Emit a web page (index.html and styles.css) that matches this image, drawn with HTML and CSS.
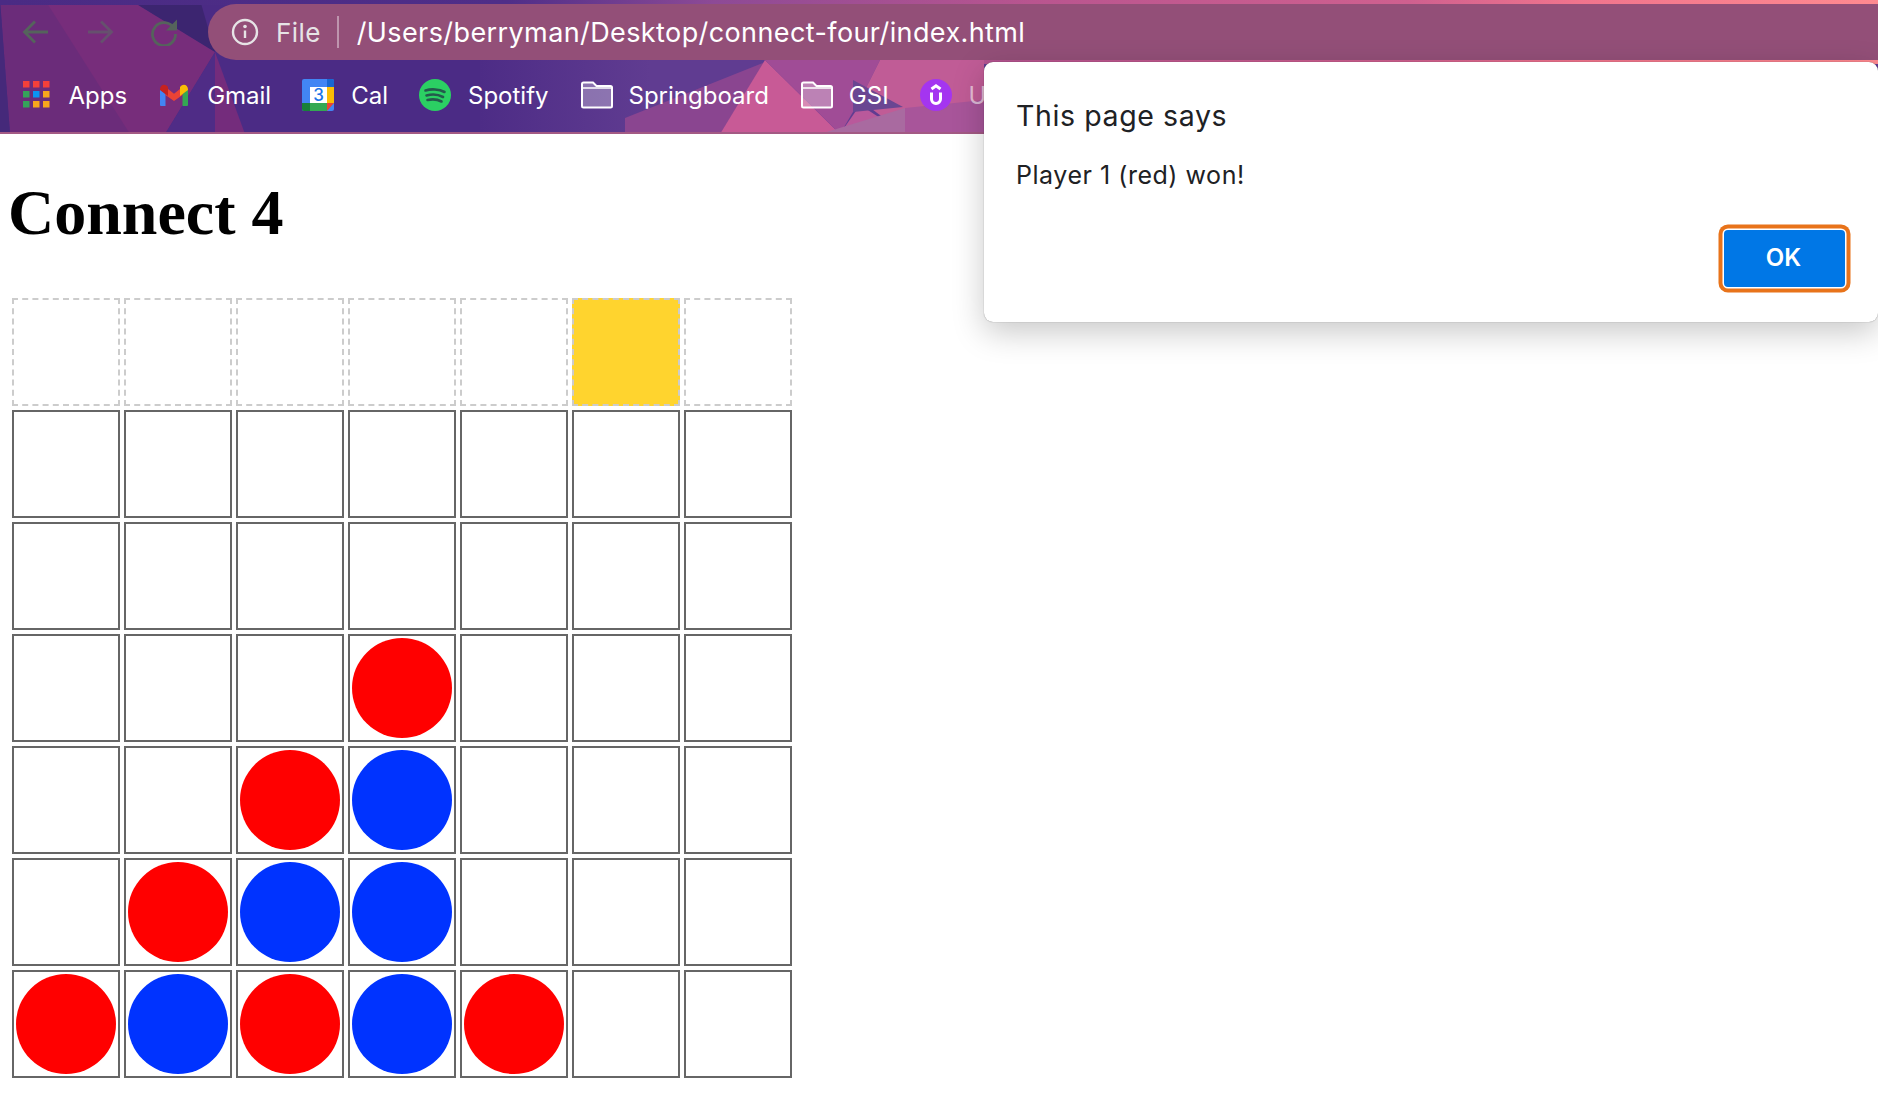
FILE: index.html
```html
<!DOCTYPE html>
<html lang="en">
<head>
<meta charset="utf-8">
<title>Connect 4</title>
<link rel="stylesheet" href="styles.css">
</head>
<body>
<header class="chrome">
  <svg class="wallpaper" viewBox="0 0 1878 134" preserveAspectRatio="none" aria-hidden="true">
    <defs>
      <linearGradient id="strip" x1="0" x2="1878" y1="0" y2="0" gradientUnits="userSpaceOnUse">
        <stop offset="0" stop-color="#4a2b84"/>
        <stop offset=".27" stop-color="#4f2e88"/>
        <stop offset=".38" stop-color="#8d4a96"/>
        <stop offset=".55" stop-color="#b9558f"/>
        <stop offset=".75" stop-color="#cf608f"/>
        <stop offset=".84" stop-color="#f0748d"/>
        <stop offset="1" stop-color="#ff8a90"/>
      </linearGradient>
      <linearGradient id="mid" x1="480" x2="650" y1="0" y2="0" gradientUnits="userSpaceOnUse">
        <stop offset="0" stop-color="#4d2c86"/>
        <stop offset="1" stop-color="#603c91"/>
      </linearGradient>
    </defs>
    <rect width="1878" height="134" fill="#4b2b85"/>
    <polygon points="0,0 130,0 215,52 165,134 10,134" fill="#6b2c7a"/>
    <polygon points="0,0 10,134 0,134" fill="#45297a"/>
    <polygon points="45,0 130,0 215,52 165,134 130,134" fill="#772d7b"/>
    <polygon points="130,0 215,52 200,0" fill="#3c2570"/>
    <polygon points="215,52 215,134 245,134" fill="#742c7c"/>
    <polygon points="215,52 165,134 215,134" fill="#4f2c86"/>
    <rect x="480" width="1398" height="134" fill="url(#mid)"/>
    <polygon points="625,118 765,62 720,134 625,134" fill="#8a4590"/>
    <polygon points="765,60 720,134 840,134" fill="#c85a96"/>
    <polygon points="765,60 880,60 860,100 840,134" fill="#a04c96"/>
    <polygon points="840,134 860,105 905,134" fill="#b9599b"/>
    <polygon points="860,100 880,60 984,60 984,134 905,134" fill="#c05c96"/>
    <polygon points="853,80 903,107 853,112" fill="#6a4692"/>
    <polygon points="820,134 905,108 905,134" fill="#a96aa0"/>
    <polygon points="905,108 984,100 984,134 905,134" fill="#a8559a"/>
    <rect width="1878" height="5" fill="url(#strip)"/>
    <rect x="984" y="58" width="894" height="6" fill="url(#strip)"/>
    <rect y="132" width="1878" height="2" fill="#a35a84"/>
  </svg>
  <div class="toolbar">
    <div class="nav-buttons">
      <svg class="nav-icon" viewBox="0 0 28 28"><path d="M26 14H3M13 3.500 2.500 14 13 24.500"/></svg>
      <svg class="nav-icon nav-icon-off" viewBox="0 0 28 28"><path d="M2 14h23M15 3.500 25.500 14 15 24.500"/></svg>
      <svg class="nav-icon" viewBox="0 0 28 28"><path d="M24 10.500A11.500 11.500 0 1 0 25.500 16"/><path class="solid" d="M27 1.500V12.500H16Z"/></svg>
    </div>
    <div class="omnibox">
      <svg class="info-icon" viewBox="0 0 28 28"><circle cx="14" cy="14" r="12"/><path d="M14 12.500v7.500"/><circle class="dot" cx="14" cy="8.500" r="1.800"/></svg>
      <span class="scheme">File</span>
      <span class="divider"></span>
      <span class="url">/Users/berryman/Desktop/connect-four/index.html</span>
    </div>
  </div>
  <nav class="bookmarks">
    <a class="bookmark">
      <svg class="bm-icon" viewBox="0 0 32 32">
        <rect x="3" y="2" width="6.500" height="6.500" fill="#f4403a"/><rect x="13" y="2" width="6.500" height="6.500" fill="#f4403a"/><rect x="23" y="2" width="6.500" height="6.500" fill="#f4403a"/>
        <rect x="3" y="12" width="6.500" height="6.500" fill="#35a45a"/><rect x="13" y="12" width="6.500" height="6.500" fill="#0a94f2"/><rect x="23" y="12" width="6.500" height="6.500" fill="#f8a61c"/>
        <rect x="3" y="22" width="6.500" height="6.500" fill="#35a45a"/><rect x="13" y="22" width="6.500" height="6.500" fill="#f8a61c"/><rect x="23" y="22" width="6.500" height="6.500" fill="#f8a61c"/>
      </svg>
      <span>Apps</span>
    </a>
    <a class="bookmark">
      <svg class="bm-icon" viewBox="0 0 32 32">
        <path d="M2 10.500V26a1 1 0 0 0 1 1h4.500V15Z" fill="#4285f4"/>
        <path d="M30 10.500V26a1 1 0 0 1-1 1h-4.500V15Z" fill="#34a853"/>
        <path d="M7.500 8 16 14.800 24.500 8V16L16 22 7.500 16Z" fill="#ea4335"/>
        <path d="M2 10.500C2 6 6 4.500 8.500 6.500L10 8V17L2 11Z" fill="#c5221f"/>
        <path d="M30 10.500C30 6 26 4.500 23.500 6.500L22 8V17L30 11Z" fill="#fbbc04"/>
      </svg>
      <span>Gmail</span>
    </a>
    <a class="bookmark">
      <svg class="bm-icon" viewBox="0 0 32 32">
        <rect width="32" height="32" rx="2" fill="#4285f4"/>
        <rect x="8" y="8" width="17" height="16" fill="#fff"/>
        <rect x="25" y="8" width="7" height="16" fill="#fbbc04"/>
        <rect x="8" y="24" width="17" height="8" fill="#34a853"/>
        <path d="M0 24h8v8H2a2 2 0 0 1-2-2Z" fill="#188038"/>
        <path d="M25 0h5a2 2 0 0 1 2 2v6h-7Z" fill="#1967d2"/>
        <path d="M25 32V24h7Z" fill="#ea4335"/>
        <text class="cal-day" x="16.500" y="22" text-anchor="middle">3</text>
      </svg>
      <span>Cal</span>
    </a>
    <a class="bookmark">
      <svg class="bm-icon" viewBox="0 0 32 32">
        <circle cx="16" cy="16" r="16" fill="#2bd063"/>
        <path class="spotify-arc" d="M6.500 11.500C12 9.800 20 10 25.500 13"/>
        <path class="spotify-arc" d="M7.500 16.500C12.500 15 19.500 15.500 24 18"/>
        <path class="spotify-arc" d="M8.500 21C13 20 18.500 20.300 22.500 22.500"/>
      </svg>
      <span>Spotify</span>
    </a>
    <a class="bookmark">
      <svg class="bm-icon" viewBox="0 0 32 32"><path class="folder" d="M2 5a1.500 1.500 0 0 1 1.500-1.500H13L16.500 7H30.500A1.500 1.500 0 0 1 32 8.500V27a1.500 1.500 0 0 1-1.500 1.500H3.500A1.500 1.500 0 0 1 2 27Z"/><path class="folder-line" d="M2 9H32"/></svg>
      <span>Springboard</span>
    </a>
    <a class="bookmark">
      <svg class="bm-icon" viewBox="0 0 32 32"><path class="folder" d="M2 5a1.500 1.500 0 0 1 1.500-1.500H13L16.500 7H30.500A1.500 1.500 0 0 1 32 8.500V27a1.500 1.500 0 0 1-1.500 1.500H3.500A1.500 1.500 0 0 1 2 27Z"/><path class="folder-line" d="M2 9H32"/></svg>
      <span>GSI</span>
    </a>
    <a class="bookmark bookmark-faded">
      <svg class="bm-icon" viewBox="0 0 32 32">
        <circle cx="16" cy="16" r="16" fill="#a435f0"/>
        <path class="udemy-u" d="M11.500 13.500V20a4.500 4.500 0 0 0 9 0V13.500"/>
        <path class="udemy-cap" d="M11.500 10 16 6.800 20.500 10"/>
      </svg>
      <span>Udemy</span>
    </a>
  </nav>
</header>

<main class="page">
  <h1 class="title">Connect 4</h1>
  <div class="board">
    <div class="slot"></div><div class="slot"></div><div class="slot"></div><div class="slot"></div><div class="slot"></div><div class="slot slot-active"></div><div class="slot"></div>

    <div class="cell"></div><div class="cell"></div><div class="cell"></div><div class="cell"></div><div class="cell"></div><div class="cell"></div><div class="cell"></div>

    <div class="cell"></div><div class="cell"></div><div class="cell"></div><div class="cell"></div><div class="cell"></div><div class="cell"></div><div class="cell"></div>

    <div class="cell"></div><div class="cell"></div><div class="cell"></div><div class="cell"><div class="piece red"></div></div><div class="cell"></div><div class="cell"></div><div class="cell"></div>

    <div class="cell"></div><div class="cell"></div><div class="cell"><div class="piece red"></div></div><div class="cell"><div class="piece blue"></div></div><div class="cell"></div><div class="cell"></div><div class="cell"></div>

    <div class="cell"></div><div class="cell"><div class="piece red"></div></div><div class="cell"><div class="piece blue"></div></div><div class="cell"><div class="piece blue"></div></div><div class="cell"></div><div class="cell"></div><div class="cell"></div>

    <div class="cell"><div class="piece red"></div></div><div class="cell"><div class="piece blue"></div></div><div class="cell"><div class="piece red"></div></div><div class="cell"><div class="piece blue"></div></div><div class="cell"><div class="piece red"></div></div><div class="cell"></div><div class="cell"></div>
  </div>
</main>

<div class="dialog" role="alertdialog">
  <div class="dialog-title">This page says</div>
  <div class="dialog-message">Player 1 (red) won!</div>
  <div class="dialog-actions"><button class="ok-button">OK</button></div>
</div>
</body>
</html>
```

FILE: styles.css
```css
* { box-sizing: border-box; }

html, body {
  margin: 0;
  height: 100%;
  overflow: hidden;
  background: #fff;
}

body {
  position: relative;
  font-family: "Liberation Serif", "Times New Roman", serif;
  color: #000;
}

/* Browser chrome */
.chrome {
  position: relative;
  height: 134px;
  font-family: Inter, "Noto Sans", sans-serif;
  color: #fff;
}

.wallpaper {
  position: absolute;
  inset: 0;
  width: 100%;
  height: 100%;
}

.toolbar {
  position: relative;
  display: flex;
  align-items: center;
  height: 62px;
  padding: 4px 0 2px 22px;
}

.nav-buttons {
  display: flex;
  align-items: center;
  gap: 36px;
  width: 186px;
}

.nav-icon {
  width: 28px;
  height: 28px;
  fill: none;
  stroke: #55635c;
  stroke-width: 2.800;
}

.nav-icon-off { stroke: #66506e; }

.nav-icon .solid {
  fill: #55635c;
  stroke: none;
}

.omnibox {
  flex: 1;
  display: flex;
  align-items: center;
  height: 56px;
  padding-left: 23px;
  border-radius: 28px 0 0 28px;
  background: #934f78;
}

.info-icon {
  width: 28px;
  height: 28px;
  fill: none;
  stroke: #e6e4e6;
  stroke-width: 2.400;
}

.info-icon .dot {
  fill: #e6e4e6;
  stroke: none;
}

.scheme {
  margin-left: 17px;
  font-size: 26px;
  letter-spacing: .4px;
  color: #e6e4e6;
}

.divider {
  width: 2px;
  height: 32px;
  margin: 0 18px 0 16px;
  background: rgba(255, 255, 255, .4);
}

.url {
  font-size: 27px;
  letter-spacing: .4px;
  white-space: nowrap;
}

.bookmarks {
  position: relative;
  display: flex;
  align-items: center;
  gap: 31px;
  height: 70px;
  padding: 0 0 4px 19.500px;
  font-size: 24px;
  white-space: nowrap;
}

.bookmark {
  display: flex;
  align-items: center;
  gap: 17px;
}

.bookmark-faded span { color: rgba(255, 255, 255, .6); }

.bm-icon {
  width: 32px;
  height: 32px;
  flex: none;
  overflow: visible;
}

.cal-day {
  font-family: Inter, sans-serif;
  font-size: 17px;
  font-weight: 500;
  fill: #1a73e8;
}

.spotify-arc {
  fill: none;
  stroke: #245a4c;
  stroke-width: 2.600;
  stroke-linecap: round;
}

.folder {
  fill: rgba(255, 255, 255, .3);
  stroke: #fff;
  stroke-width: 2;
}

.folder-line {
  fill: none;
  stroke: #fff;
  stroke-width: 1.500;
}

.udemy-u, .udemy-cap {
  fill: none;
  stroke: #fff;
  stroke-width: 3;
}

/* Page */
.page { padding: 0 8px; }

.title {
  margin: 42px 0 44px;
  font-size: 64px;
  font-weight: 700;
  line-height: 74px;
}

.board {
  display: grid;
  grid-template-columns: repeat(7, 108px);
  grid-auto-rows: 108px;
  gap: 4px;
  padding: 4px;
}

.slot { border: 2px dashed #ccc; }

.slot-active { background: #ffd42e; }

.cell {
  padding: 2px;
  border: 2px solid #666;
}

.piece {
  width: 100px;
  height: 100px;
  border-radius: 50%;
}

.red { background: #ff0000; }
.blue { background: #0033ff; }

/* Alert */
.dialog {
  position: absolute;
  top: 62px;
  left: 984px;
  right: 0;
  height: 260px;
  display: flex;
  flex-direction: column;
  padding: 36px 33px 35px 32px;
  border-radius: 9px;
  background: #fff;
  box-shadow: 0 0 1px rgba(0, 0, 0, .5), 0 10px 32px rgba(0, 0, 0, .22);
  font-family: Inter, "Noto Sans", sans-serif;
  color: #202124;
}

.dialog-title {
  font-size: 28.500px;
  letter-spacing: .6px;
  line-height: 36px;
}

.dialog-message {
  margin-top: 26px;
  font-size: 25px;
  letter-spacing: .53px;
  line-height: 30px;
}

.dialog-actions {
  margin-top: auto;
  display: flex;
  justify-content: flex-end;
}

.ok-button {
  width: 121px;
  height: 57px;
  padding: 0 2px 2px 0;
  border: 0;
  border-radius: 4px;
  background: #0077e6;
  box-shadow: 0 0 0 1.500px #fff, 0 0 0 5.500px #e8731a;
  color: #fff;
  font-family: Inter, "Noto Sans", sans-serif;
  font-size: 24px;
  font-weight: 600;
}
```
